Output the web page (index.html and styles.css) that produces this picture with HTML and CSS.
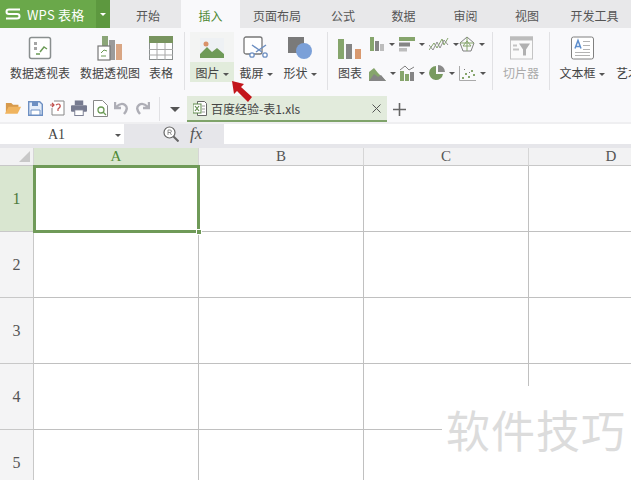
FILE: index.html
```html
<!DOCTYPE html>
<html>
<head>
<meta charset="utf-8" />
<title>百度经验-表1.xls</title>
<link rel="stylesheet" href="styles.css">
</head>
<body>
<div class="app">
  <div class="tabbar">
    <div class="logo">
      <div class="logo-main">
        <svg width="16" height="12" viewBox="0 0 16 12"><path d="M15 1.500H4Q1.500 1.500 1.500 3.700T4 6H12Q14.500 6 14.500 8.200T12 10.500H1" fill="none" stroke="#fff" stroke-width="2"/></svg>
        <span>WPS 表格</span>
      </div>
      <div class="logo-drop"><i class="caret caret-white"></i></div>
    </div>
    <div class="tab t1">开始</div>
    <div class="tab t2 active">插入</div>
    <div class="tab t3">页面布局</div>
    <div class="tab t4">公式</div>
    <div class="tab t5">数据</div>
    <div class="tab t6">审阅</div>
    <div class="tab t7">视图</div>
    <div class="tab t8">开发工具</div>
  </div>

  <div class="ribbon">
    <div class="tool w70">
      <svg width="24" height="24" viewBox="0 0 24 24"><rect x="1.500" y="1.500" width="21" height="21" rx="2" fill="#fff" stroke="#8a8f8f" stroke-width="1.500"/><path d="M6 6h3v3H6zM6 11h3v3H6z" fill="#a5a5a5"/><path d="M12 16l4-5 3 2M8 18h4" fill="none" stroke="#6b9a55" stroke-width="1.500"/></svg>
      <span>数据透视表</span>
    </div>
    <div class="tool w70">
      <svg width="26" height="26" viewBox="0 0 26 26"><rect x="5" y="1" width="6" height="10" fill="#8ba578"/><rect x="12" y="5" width="6" height="20" fill="#9b9b9b"/><rect x="19" y="9" width="6" height="16" fill="#d9a684"/><rect x="1" y="11" width="12" height="14" fill="#fff" stroke="#777" stroke-width="1.200"/><path d="M4 18l3-3 3 1M4 21h5" fill="none" stroke="#6b9a55"/></svg>
      <span>数据透视图</span>
    </div>
    <div class="tool w32">
      <svg width="24" height="24" viewBox="0 0 24 24"><rect x=".5" y=".5" width="23" height="23" fill="#fff" stroke="#8a8f8f"/><rect x="0" y="0" width="24" height="7" fill="#78945f"/><path d="M0 13.500h24M0 19h24M8 7v17M16 7v17" stroke="#a8a8a8" fill="none"/></svg>
      <span>表格</span>
    </div>
    <div class="sep s1"></div>
    <div class="tool w44 hover">
      <svg width="24" height="20" viewBox="0 0 24 20"><rect width="24" height="20" fill="#eef1f4"/><circle cx="6" cy="6" r="2.500" fill="#d9926a"/><path d="M0 20V16L7 9l5 5 5-4 7 6v4z" fill="#6f9a58"/></svg>
      <span>图片<i class="caret"></i></span>
    </div>
    <div class="tool w44">
      <svg width="26" height="24" viewBox="0 0 26 24"><rect x="1" y="1" width="18" height="17" rx="2" fill="#fff" stroke="#777" stroke-width="1.300"/><path d="M9 9l10 7M23 9l-10 7" stroke="#6d8fc2" stroke-width="1.500"/><circle cx="9" cy="19" r="2.200" fill="#fff" stroke="#6d8fc2" stroke-width="1.300"/><circle cx="22" cy="19" r="2.200" fill="#fff" stroke="#6d8fc2" stroke-width="1.300"/></svg>
      <span>截屏<i class="caret"></i></span>
    </div>
    <div class="tool w44">
      <svg width="26" height="24" viewBox="0 0 26 24"><rect x="1" y="1" width="16" height="16" fill="#7a7a7a"/><circle cx="17" cy="15" r="8" fill="#7ba0d8"/></svg>
      <span>形状<i class="caret"></i></span>
    </div>
    <div class="sep s2"></div>
    <div class="chart-main">
      <svg width="24" height="22" viewBox="0 0 24 22"><rect x="0" y="1" width="6" height="20" fill="#86a56c"/><rect x="8" y="6" width="6" height="15" fill="#858585"/><rect x="17" y="11" width="6" height="10" fill="#d9996f"/></svg>
      <span>图表</span>
    </div>
    <div class="chart-grid">
      <div class="mini"><svg width="16" height="16" viewBox="0 0 16 16"><rect x="1" y="1" width="4" height="14" fill="#86a56c"/><rect x="6" y="5" width="4" height="10" fill="#858585"/><rect x="11" y="8" width="4" height="7" fill="#bdbdbd"/></svg><i class="caret"></i></div>
      <div class="mini"><svg width="16" height="16" viewBox="0 0 16 16"><rect x="0" y="1" width="16" height="4" fill="#86a56c"/><rect x="0" y="6.500" width="11" height="4" fill="#858585"/><rect x="0" y="12" width="8" height="3.500" fill="#bdbdbd"/></svg><i class="caret"></i></div>
      <div class="mini"><svg width="20" height="16" viewBox="0 0 20 16"><path d="M0 14l5-7 3 5 5-9 2 6 4-7" fill="none" stroke="#86a56c"/><path d="M0 9l4 5 4-8 3 6 4-8 4 5" fill="none" stroke="#909090"/></svg><i class="caret"></i></div>
      <div class="mini"><svg width="16" height="16" viewBox="0 0 16 16"><path d="M8 1l7 6-3 8H4L1 7z" fill="none" stroke="#808080"/><path d="M8 1v14M1 7h14M4 10l4-5 4 5z" fill="none" stroke="#86a56c"/></svg><i class="caret"></i></div>
      <div class="mini"><svg width="17" height="15" viewBox="0 0 17 15"><path d="M0 15V6l5-4 4 5 8 8z" fill="#86a56c"/><path d="M0 15l5-7 4 3 3-2 5 6z" fill="#858585"/></svg><i class="caret"></i></div>
      <div class="mini"><svg width="16" height="16" viewBox="0 0 16 16"><rect x="1" y="6" width="4" height="10" fill="#86a56c"/><rect x="6" y="9" width="4" height="7" fill="#86a56c"/><rect x="11" y="7" width="4" height="9" fill="#858585"/><path d="M1 5l5-4 4 4 5-3" fill="none" stroke="#808080"/></svg><i class="caret"></i></div>
      <div class="mini"><svg width="16" height="16" viewBox="0 0 16 16"><path d="M7 1a7 7 0 1 0 7 8H7z" fill="#789a60"/><path d="M9 0a7 7 0 0 1 7 7H9z" fill="#8a8a8a"/></svg><i class="caret"></i></div>
      <div class="mini"><svg width="17" height="15" viewBox="0 0 17 15"><path d="M.5 0v14.500H17" fill="none" stroke="#aaa"/><path d="M3 11h2v2H3zM6 7h2v2H6zM9 10h2v2H9zM12 4h2v2h-2zM14 8h2v2h-2z" fill="#86a56c"/><path d="M5 3h1v1H5zM10 6h1v1h-1z" fill="#777"/></svg><i class="caret"></i></div>
    </div>
    <div class="sep s3"></div>
    <div class="tool w54 muted">
      <svg width="23" height="23" viewBox="0 0 23 23"><rect x=".5" y=".5" width="22" height="22" fill="#fafafa" stroke="#c4c4c4"/><rect width="23" height="4" fill="#bcbcbc"/><path d="M9 7h11l-4 6v6h-3v-6z" fill="#b0b0b0"/><path d="M3 9h4M3 13h6" stroke="#c4c4c4" stroke-width="2"/></svg>
      <span>切片器</span>
    </div>
    <div class="sep s4"></div>
    <div class="tool w64">
      <svg width="23" height="23" viewBox="0 0 23 23"><rect x=".5" y=".5" width="22" height="22" rx="2" fill="#fff" stroke="#808080"/><path d="M4 12l3-8 3 8M5 10h4" fill="none" stroke="#5f8fce" stroke-width="1.500"/><path d="M12 5h7M12 9h7M12 13h7M4 16h15M4 19h15" stroke="#b3b3b3"/></svg>
      <span>文本框<i class="caret"></i></span>
    </div>
    <div class="tool w40">
      <svg width="23" height="23" viewBox="0 0 23 23"></svg>
      <span>艺术字</span>
    </div>
  </div>

  <div class="quickbar">
    <div class="qa-icons">
      <svg width="17" height="14" viewBox="0 0 19 15"><path d="M1 2h6l2 2h6v3H5L1 14z" fill="#d79a4c"/><path d="M4 6h14l-4 8H0z" fill="#f0b45f"/></svg>
      <svg width="15" height="15" viewBox="0 0 15 15"><path d="M.7.7h11l2.600 2.600v11H.7z" fill="#e6eefa" stroke="#6d8fc2" stroke-width="1.400"/><path d="M4 1h6v4H4z" fill="#6d8fc2"/><path d="M3 9h9v5H3z" fill="#fff" stroke="#6d8fc2"/></svg>
      <svg width="16" height="16" viewBox="0 0 16 16"><path d="M5 1h10v14H3V8" fill="#fff" stroke="#888"/><path d="M7 5q3-2 4 0t-2 4v2M1 5h4M3 3l2 2-2 2" fill="none" stroke="#c0504d" stroke-width="1.200"/></svg>
      <svg width="16" height="16" viewBox="0 0 17 16"><rect x="4" y="0" width="9" height="5" fill="#777b90"/><rect x="0" y="5" width="17" height="7" rx="1" fill="#777b90"/><rect x="4" y="10" width="9" height="6" fill="#fff" stroke="#777b90"/></svg>
      <svg width="15" height="17" viewBox="0 0 15 17"><path d="M.5.500h9l5 5v11H.5z" fill="#fff" stroke="#888"/><circle cx="8" cy="10" r="3" fill="none" stroke="#6b9a55" stroke-width="1.300"/><path d="M10 12l3 3" stroke="#6b9a55" stroke-width="1.300"/></svg>
      <svg width="15" height="14" viewBox="0 0 15 14"><path d="M1 1v6h6M2 6q5-5 9-2t-1 9" fill="none" stroke="#aeaeb6" stroke-width="2.400"/></svg>
      <svg width="15" height="14" viewBox="0 0 15 14"><path d="M14 1v6H8M13 6Q8 1 4 4t1 9" fill="none" stroke="#aeaeb6" stroke-width="2.400"/></svg>
    </div>
    <div class="qa-sep"></div>
    <i class="qa-caret"></i>
    <div class="doc-tab">
      <svg width="14" height="15" viewBox="0 0 14 15"><path d="M4.500.500h7l2 2v12h-9z" fill="#fff" stroke="#666"/><rect x="0" y="3" width="8" height="9" fill="#fff" stroke="#5f8a4b"/><path d="M2 5l4 5M6 5l-4 5" stroke="#5f8a4b" stroke-width="1.200"/><path d="M9 5h3M9 8h3M9 11h3" stroke="#999"/></svg>
      <span class="doc-name">百度经验-表1.xls</span>
      <svg class="doc-close" width="9" height="9" viewBox="0 0 9 9"><path d="M.5.500l8 8M8.500.500l-8 8" stroke="#555"/></svg>
    </div>
    <svg class="doc-add" width="13" height="13" viewBox="0 0 13 13"><path d="M6.500 0v13M0 6.500h13" stroke="#666" stroke-width="1.600"/></svg>
  </div>

  <div class="formula">
    <div class="namebox"><span class="name-text">A1</span><i class="caret"></i></div>
    <div class="fx-tools">
      <svg width="16" height="16" viewBox="0 0 16 16"><circle cx="6.500" cy="6.500" r="5.500" fill="#fff" stroke="#666" stroke-width="1.200"/><path d="M10.500 10.500l5 5" stroke="#666" stroke-width="2"/><path d="M5 9V4h2q1.500 0 1.500 1.200T7 6.500H5M7 6.500L8.500 9" fill="none" stroke="#777" stroke-width=".8"/></svg>
      <span class="fx">fx</span>
    </div>
    <div class="fx-input"></div>
  </div>

  <div class="sheet">
    <div class="corner"><i class="corner-mark"></i></div>
    <div class="col col-on">A</div>
    <div class="col">B</div>
    <div class="col">C</div>
    <div class="col">D</div>

    <div class="row row-on">1</div>
    <div class="cell selected"><i class="handle"></i></div><div class="cell"></div><div class="cell"></div><div class="cell"></div>
    <div class="row">2</div>
    <div class="cell"></div><div class="cell"></div><div class="cell"></div><div class="cell"></div>
    <div class="row">3</div>
    <div class="cell"></div><div class="cell"></div><div class="cell"></div><div class="cell"></div>
    <div class="row">4</div>
    <div class="cell"></div><div class="cell"></div><div class="cell"></div><div class="cell"></div>
    <div class="row">5</div>
    <div class="cell"></div><div class="cell"></div><div class="cell"></div><div class="cell"></div>
  </div>

  <svg class="arrow" width="24" height="24" viewBox="0 0 24 24"><path d="M1 1l12 3-3 3 11 10-4 5L6 11l-3 3z" fill="#c3161c"/></svg>
  <div class="watermark">软件技巧</div>
</div>
</body>
</html>
```

FILE: styles.css
```css
*{ padding:0; margin:0; box-sizing:border-box; }
html,body{ width:631px; height:480px; overflow:hidden; background:#fff; }
body{ font-family:"Noto Sans CJK SC","Liberation Sans",sans-serif; font-size:12px; color:#444; }
.app{ position:relative; width:631px; height:480px; overflow:hidden; }

.caret{ display:inline-block; width:0; height:0; margin-left:3px; vertical-align:middle; border:3px solid transparent; border-top:3px solid #555; border-bottom:0; }
.caret-white{ border-top-color:#fff; margin:0; }

/* top tabs */
.tabbar{ display:flex; height:28px; background:#e8e8ea; }
.logo{ display:flex; width:110px; height:28px; color:#fff; }
.logo-main{ display:flex; flex:1; align-items:center; gap:6px; padding-left:5px; background:#6aa84a; font-size:13px; letter-spacing:.2px; }
.logo-drop{ display:flex; width:14px; align-items:center; justify-content:center; background:#5d983f; }
.tab{ display:flex; align-items:center; justify-content:center; height:28px; padding-top:3px; color:#555; white-space:nowrap; }
.tab.active{ background:#f9f9fb; color:#4f8a35; }
.t1{ width:71px; padding-left:5px; }
.t2{ width:59px; }
.t3{ width:74px; }
.t4{ width:58px; }
.t5{ width:63px; }
.t6{ width:61px; }
.t7{ width:62px; }
.t8{ width:73px; }

/* ribbon */
.ribbon{ display:flex; height:64px; background:#f9f9fb; padding:4px 0 0 5px; overflow:hidden; }
.tool{ display:flex; flex:none; flex-direction:column; align-items:center; height:50px; padding-top:3px; white-space:nowrap; }
.tool svg{ height:26px; flex:none; }
.tool span{ margin-top:4px; line-height:16px; }
.tool.hover{ background:linear-gradient(#f3f4f3 0,#f3f4f3 30px,#e2ecdc 30px); }
.tool.muted{ color:#aaa; }
.w70{ width:70px; }
.w32{ width:32px; }
.w44{ width:44px; }
.w54{ width:54px; }
.w64{ width:64px; }
.w40{ width:40px; }
.sep{ flex:none; width:1px; height:58px; background:#e1e1e4; }
.s1{ margin:0 5px 0 7px; }
.s2{ margin:0 10px 0 5px; }
.s3{ margin:0 1px 0 0; }
.s4{ margin:0 0 0 1px; }
.chart-main{ display:flex; flex:none; flex-direction:column; align-items:center; width:24px; padding-top:6px; }
.chart-main span{ margin-top:5px; line-height:16px; white-space:nowrap; }
.chart-grid{ display:grid; flex:none; grid-template-columns:repeat(4,30px); grid-template-rows:24px 34px; width:130px; padding-left:7px; }
.mini{ display:flex; align-items:center; gap:0; }
.mini .caret{ margin-left:4px; }

/* quick access and file tab */
.quickbar{ display:flex; align-items:center; height:32px; background:#f9f9fb; padding-top:4px; border-bottom:2px solid #efeff1; }
.qa-icons{ display:flex; align-items:center; gap:6px; width:153px; margin-bottom:2px; padding-left:5px; }
.qa-sep{ width:1px; height:24px; margin-left:6px; background:#e1e1e4; }
.qa-caret{ width:0; height:0; margin:0 7px 0 10px; border:5px solid transparent; border-top:5px solid #555; border-bottom:0; }
.doc-tab{ display:flex; align-items:center; width:200px; height:26px; padding:0 6px; background:#e2ebdc; border-bottom:2px solid #7fa36a; }
.doc-name{ flex:1; margin-left:4px; color:#444; }
.doc-add{ margin-left:6px; }

/* formula bar */
.formula{ display:flex; height:24px; padding-bottom:4px; background:#e6e6ea; }
.namebox{ display:flex; align-items:center; justify-content:space-between; width:124px; padding:2px 3px 0 48px; background:#fff; font-family:"Liberation Serif",serif; font-size:14px; }
.fx-tools{ display:flex; align-items:center; gap:11px; width:100px; padding-left:39px; }
.fx{ font-family:"Liberation Serif",serif; font-style:italic; font-size:17px; color:#555; }
.fx-input{ flex:1; background:#fff; }

/* sheet */
.sheet{ display:grid; grid-template-columns:34px 165px 165px 165px 165px; grid-template-rows:18px repeat(5,66px); font-family:"Liberation Serif",serif; font-size:15px; }
.corner{ position:relative; background:#f2f2f3; border-right:1px solid #d6d6d6; border-bottom:1px solid #c8c8c8; }
.corner-mark{ position:absolute; right:3px; bottom:3px; width:0; height:0; border-style:solid; border-width:0 0 11px 11px; border-color:transparent transparent #c8c8c8 transparent; }
.col{ display:flex; align-items:center; justify-content:center; background:#f2f2f3; border-right:1px solid #d6d6d6; border-bottom:1px solid #c8c8c8; color:#555; }
.col-on{ background:#d9e6d0; color:#4f8a35; }
.row{ display:flex; align-items:center; justify-content:center; background:#f4f4f5; border-right:1px solid #c8c8c8; border-bottom:1px solid #c8c8c8; color:#555; font-size:16px; }
.row-on{ background:#d9e6d0; color:#4f7a3c; }
.cell{ border-right:1px solid #c0c0c0; border-bottom:1px solid #c0c0c0; }
.cell.selected{ position:relative; outline:3px solid #6f9a58; outline-offset:-2px; z-index:1; }
.handle{ position:absolute; right:-4px; bottom:-4px; width:6px; height:6px; background:#6f9a58; border:1px solid #fff; }

/* overlays */
.arrow{ position:absolute; left:231px; top:80px; }
.watermark{ position:absolute; left:442px; top:386px; width:189px; height:94px; padding:13px 0 0 4px; background:#fff; color:#dcdcdc; font-size:44px; line-height:60px; letter-spacing:1px; white-space:nowrap; }
```
